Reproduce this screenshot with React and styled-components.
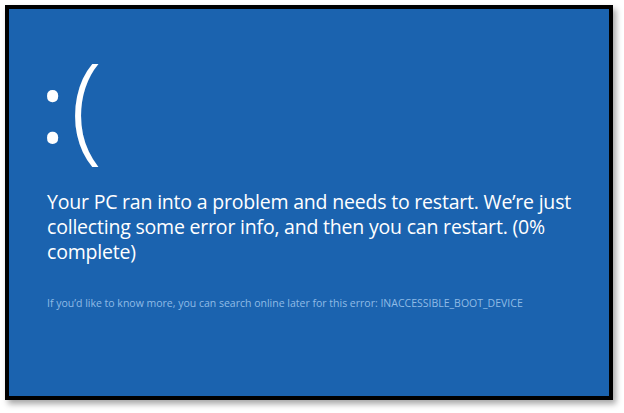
import React from 'react'
import styled, { createGlobalStyle } from 'styled-components'

const Global = createGlobalStyle`
  html, body {
    margin: 0;
    padding: 0;
    background: #ffffff;
  }
  body {
    font-family: "Open Sans", "Noto Sans", sans-serif;
  }
`

const Page = styled.div`
  width: 624px;
  height: 413px;
  padding: 5px 0 0 5px;
  box-sizing: border-box;
`

const Frame = styled.div`
  width: 608px;
  height: 395px;
  box-sizing: border-box;
  border: 4px solid #000;
  background: #1b63af;
  box-shadow: 3px 4px 6px rgba(0, 0, 0, 0.35);
  padding: 38px 30px 0 38px;
  color: #fff;
`

const Face = styled.div`
  font-size: 118px;
  font-weight: 300;
  line-height: 112px;
  height: 120px;
  margin-left: -7px;
  letter-spacing: 2px;
`

const Colon = styled.span`
  font-size: 96px;
  font-weight: 400;
  letter-spacing: 5px;
  vertical-align: 5px;
`

const Message = styled.p`
  margin: 22px 0 0;
  font-size: 19.5px;
  line-height: 25px;
  letter-spacing: -0.2px;
  max-width: 548px;
`

const Detail = styled.p`
  margin: 32px 0 0;
  font-size: 10.5px;
  color: #8fbbe6;
`

export default function App() {
  return (
    <>
      <Global />
      <Page>
        <Frame>
          <Face><Colon>:</Colon>(</Face>
          <Message>
            Your PC ran into a problem and needs to restart. We’re just collecting some error info, and then you can restart. (0% complete)
          </Message>
          <Detail>
            If you’d like to know more, you can search online later for this error: INACCESSIBLE_BOOT_DEVICE
          </Detail>
        </Frame>
      </Page>
    </>
  )
}
